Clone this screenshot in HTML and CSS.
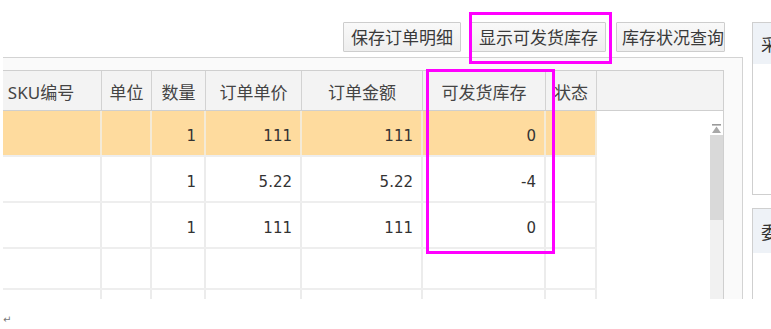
FILE: index.html
```html
<!DOCTYPE html>
<html lang="zh-CN">
<head>
<meta charset="utf-8">
<title>订单明细</title>
<link rel="stylesheet" href="styles.css">
</head>
<body>
<div class="page">
  <div class="main">
    <div class="toolbar">
      <button class="btn">保存订单明细</button>
      <button class="btn">显示可发货库存</button>
      <button class="btn btn-last">库存状况查询</button>
    </div>
    <div class="panel">
      <div class="grid">
        <div class="ghead">
          <div class="hc">SKU编号</div>
          <div class="hc">单位</div>
          <div class="hc">数量</div>
          <div class="hc">订单单价</div>
          <div class="hc">订单金额</div>
          <div class="hc">可发货库存</div>
          <div class="hc">状态</div>
          <div class="hc hc-fill"></div>
        </div>
        <div class="gbody">
          <div class="rows">
            <div class="row row-sel">
              <div class="c"></div><div class="c"></div><div class="c">1</div><div class="c">111</div><div class="c">111</div><div class="c">0</div><div class="c"></div>
            </div>
            <div class="row">
              <div class="c"></div><div class="c"></div><div class="c">1</div><div class="c">5.22</div><div class="c">5.22</div><div class="c">-4</div><div class="c"></div>
            </div>
            <div class="row">
              <div class="c"></div><div class="c"></div><div class="c">1</div><div class="c">111</div><div class="c">111</div><div class="c">0</div><div class="c"></div>
            </div>
            <div class="row row-short">
              <div class="c"></div><div class="c"></div><div class="c"></div><div class="c"></div><div class="c"></div><div class="c"></div><div class="c"></div>
            </div>
            <div class="row">
              <div class="c"></div><div class="c"></div><div class="c"></div><div class="c"></div><div class="c"></div><div class="c"></div><div class="c"></div>
            </div>
          </div>
          <div class="blank"></div>
          <div class="vscroll">
            <svg class="sarrow" width="11" height="11" viewBox="0 0 11 11"><rect x="1" y="0" width="9" height="1.6" fill="#9a9a9a"/><path d="M5.5 2.5 L10 9 L1 9 Z" fill="#a8a8a8"/></svg>
            <div class="thumb"></div>
            <div class="track"></div>
          </div>
        </div>
      </div>
    </div>
  </div>
  <div class="side">
    <div class="sp sp-1">
      <div class="sp-head">采</div>
    </div>
    <div class="sp sp-2">
      <div class="sp-head">委</div>
    </div>
  </div>
</div>
<div class="pilcrow">↵</div>
<div class="mark mark-btn"></div>
<div class="mark mark-col"></div>
</body>
</html>
```
FILE: styles.css
```css
* { box-sizing: border-box; }
html, body { margin: 0; padding: 0; }
body {
  width: 771px;
  height: 329px;
  overflow: hidden;
  background: #fff;
  font-family: "Noto Sans", "Noto Sans CJK SC", sans-serif;
  color: #333;
  position: relative;
}
.page {
  display: flex;
  height: 299px;
}
.main {
  flex: 0 0 743px;
  padding-left: 3px;
  display: flex;
  flex-direction: column;
}
.toolbar {
  display: flex;
  justify-content: flex-end;
  gap: 10px;
  padding-top: 22px;
  padding-right: 18px;
  height: 57px;
}
.btn {
  height: 30px;
  padding: 0 7px;
  border: 1px solid #cdcdcd;
  border-radius: 1px;
  background: linear-gradient(#f9f9f9, #eeeeee);
  font-family: "Noto Sans CJK SC", sans-serif;
  font-size: 17px;
  line-height: 26px;
  color: #3a3a3a;
  white-space: nowrap;
}
.btn-last {
  width: 109px;
  padding: 0 0 0 5px;
  text-align: left;
  overflow: hidden;
}
.panel {
  flex: 1;
  border-top: 1px solid #d3d3d3;
  border-right: 1px solid #d3d3d3;
  background: #fafafa;
  padding-top: 12px;
  overflow: hidden;
}
.grid {
  margin-left: -22px;
  width: 743px;
  border-right: 1px solid #cfcfcf;
  background: #fff;
}
.ghead {
  display: grid;
  grid-template-columns: 121px 50px 54px 96px 121px 123px 51px 1fr;
  height: 41px;
  border-top: 1px solid #cfcfcf;
  border-bottom: 1px solid #cfcfcf;
  background: #f3f3f3;
}
.hc {
  border-right: 1px solid #d2d2d2;
  display: flex;
  align-items: center;
  justify-content: center;
  font-size: 17px;
  color: #444;
  white-space: nowrap;
  padding-top: 1px;
}
.hc-fill { border-right: none; }
.gbody {
  display: flex;
  height: 188px;
}
.rows {
  flex: 0 0 616px;
}
.row {
  display: grid;
  grid-template-columns: 121px 50px 54px 96px 121px 123px 51px;
  height: 46px;
  border-bottom: 2px solid #eeeeee;
}
.row-short { height: 41px; }
.row-sel { background: #fedb9e; }
.c {
  border-right: 2px solid #ececec;
  display: flex;
  align-items: center;
  justify-content: flex-end;
  padding: 6px 8px 0 0;
  font-family: "DejaVu Sans", Verdana, sans-serif;
  font-size: 15px;
  color: #333;
}
.row-sel .c { border-right-color: #f4ead6; }
.blank { flex: 1; }
.vscroll {
  flex: 0 0 13px;
  display: flex;
  flex-direction: column;
  padding-top: 13px;
}
.sarrow { display: block; margin: 0 auto; flex: 0 0 11px; }
.thumb {
  flex: 0 0 85px;
  background: #d9d9d9;
}
.track {
  flex: 1;
  background: #f1f1f1;
}
.side {
  margin-left: 9px;
  padding-top: 22px;
  flex: 0 0 19px;
  display: flex;
  flex-direction: column;
}
.sp {
  border: 1px solid #cfcfcf;
  border-right: none;
  background: #fff;
}
.sp-1 { height: 173px; }
.sp-2 { margin-top: 13px; flex: 1; border-bottom: none; }
.sp-head {
  height: 41px;
  background: #eef2f7;
  padding-left: 8px;
  font-family: "Noto Sans CJK SC", sans-serif;
  font-size: 17px;
  line-height: 42px;
  color: #333;
  white-space: nowrap;
  overflow: hidden;
}
.sp-2 .sp-head { height: 44px; line-height: 46px; }
.pilcrow {
  padding-left: 3px;
  margin-top: 15px;
  font-family: "DejaVu Sans", sans-serif;
  font-size: 10px;
  color: #777;
  line-height: 12px;
}
.mark {
  position: absolute;
  border: 3px solid #ff00ff;
}
.mark-btn { left: 469px; top: 12px; width: 143px; height: 52px; }
.mark-col { left: 426px; top: 69px; width: 129px; height: 185px; }
```
